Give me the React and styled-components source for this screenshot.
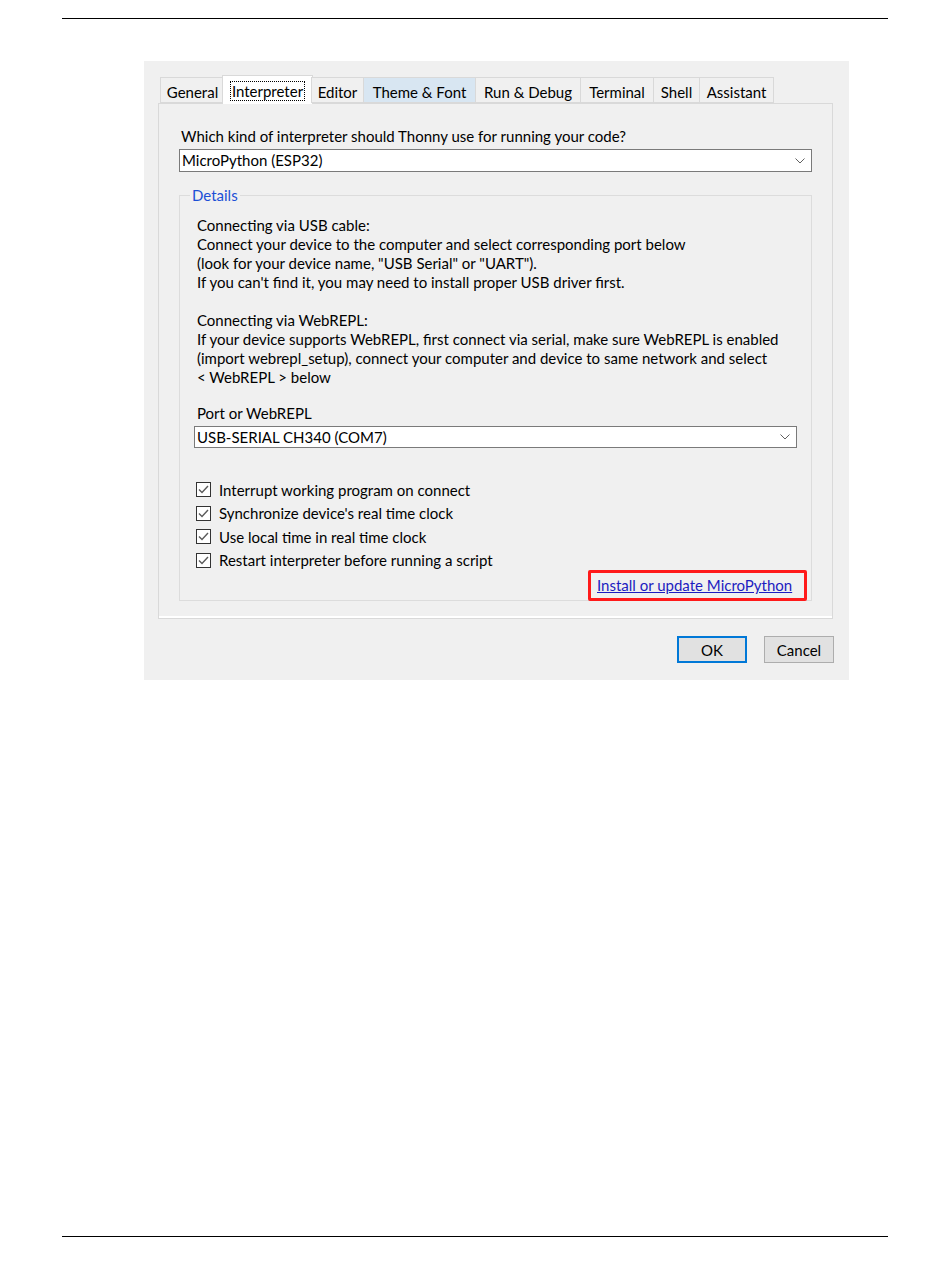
import React from "react";
import styled, { createGlobalStyle } from "styled-components";

const GlobalStyle = createGlobalStyle`
  html, body {
    margin: 0;
    padding: 0;
    background: #ffffff;
  }
  body {
    font-family: "Lato", "Noto Sans", "DejaVu Sans", sans-serif;
    font-size: 15px;
    color: #000;
  }
`;

const tabs = [
  { label: "General", width: 64 },
  { label: "Interpreter", width: 87, selected: true },
  { label: "Editor", width: 52 },
  { label: "Theme & Font", width: 112, hover: true },
  { label: "Run & Debug", width: 105 },
  { label: "Terminal", width: 73 },
  { label: "Shell", width: 46 },
  { label: "Assistant", width: 75 },
];

const options = [
  "Interrupt working program on connect",
  "Synchronize device's real time clock",
  "Use local time in real time clock",
  "Restart interpreter before running a script",
];

const App = () => {
  return (
    <Page>
      <GlobalStyle />
      <Rule />
      <Dialog>
        <TabBar>
          {tabs.map((t) => (
            <Tab key={t.label} $width={t.width} $selected={t.selected} $hover={t.hover}>
              {t.selected ? <Focus>{t.label}</Focus> : t.label}
            </Tab>
          ))}
        </TabBar>
        <Panel>
          <Label>Which kind of interpreter should Thonny use for running your code?</Label>
          <Combo $height={23}>
            <span>MicroPython (ESP32)</span>
            <Chevron />
          </Combo>
          <Group>
            <Legend>Details</Legend>
            <Text>
              Connecting via USB cable:
              <br />
              Connect your device to the computer and select corresponding port below
              <br />
              (look for your device name, "USB Serial" or "UART").
              <br />
              If you can't find it, you may need to install proper USB driver first.
              <br />
              <br />
              Connecting via WebREPL:
              <br />
              If your device supports WebREPL, first connect via serial, make sure WebREPL is enabled
              <br />
              (import webrepl_setup), connect your computer and device to same network and select
              <br />
              {"< WebREPL > below"}
            </Text>
            <PortLabel>Port or WebREPL</PortLabel>
            <Combo $height={22}>
              <span>USB-SERIAL CH340 (COM7)</span>
              <Chevron />
            </Combo>
            <Checks>
              {options.map((o) => (
                <CheckRow key={o}>
                  <Box>
                    <svg width="11" height="9" viewBox="0 0 11 9">
                      <polyline points="1,4.5 4,7.5 10,1" fill="none" stroke="#5a5a5a" strokeWidth="1.4" />
                    </svg>
                  </Box>
                  {o}
                </CheckRow>
              ))}
            </Checks>
            <LinkRow>
              <Highlight>
                <LinkText href="#">Install or update MicroPython</LinkText>
              </Highlight>
            </LinkRow>
          </Group>
        </Panel>
        <Buttons>
          <Button $default>OK</Button>
          <Button>Cancel</Button>
        </Buttons>
      </Dialog>
      <BottomRule />
    </Page>
  );
};

const Chevron = () => (
  <svg width="10" height="6" viewBox="0 0 10 6">
    <polyline points="0.5,0.5 5,5 9.5,0.5" fill="none" stroke="#606060" strokeWidth="1" />
  </svg>
);

const Page = styled.div`
  width: 826px;
  padding: 18px 0 0 62px;
`;

const Rule = styled.div`
  height: 1px;
  background: #000;
`;

const BottomRule = styled(Rule)`
  margin-top: 556px;
`;

const Dialog = styled.div`
  width: 705px;
  height: 619px;
  box-sizing: border-box;
  margin: 42px 0 0 82px;
  padding: 14px 15px 0 14px;
  background: #f0f0f0;
  display: flex;
  flex-direction: column;
`;

const TabBar = styled.div`
  display: flex;
  align-items: flex-end;
  padding-left: 2px;
  height: 29px;
  position: relative;
  z-index: 1;
  margin-bottom: -1px;
`;

const Tab = styled.div`
  box-sizing: border-box;
  width: ${(p) => p.$width + (p.$selected ? 4 : 0)}px;
  height: ${(p) => (p.$selected ? 29 : 26)}px;
  margin: ${(p) => (p.$selected ? "0 -2px" : "0 0 1px 0")};
  border: 1px solid #d9d9d9;
  border-right: ${(p) => (p.$selected ? "1px solid #d9d9d9" : "none")};
  border-bottom: ${(p) => (p.$selected ? "none" : "1px solid #d9d9d9")};
  background: ${(p) => (p.$selected ? "#ffffff" : p.$hover ? "#d8e6f2" : "#f0f0f0")};
  display: flex;
  align-items: center;
  justify-content: center;
  padding-top: ${(p) => (p.$selected ? 1 : 3)}px;
  white-space: nowrap;
  &:last-child {
    border-right: 1px solid #d9d9d9;
  }
`;

const Focus = styled.span`
  outline: 1px dotted #000;
  line-height: 18px;
  padding: 0 1px;
`;

const Panel = styled.div`
  width: 675px;
  box-sizing: border-box;
  border: 1px solid #d9d9d9;
  box-shadow: inset 0 -2px 0 #ffffff;
  padding: 23px 20px 17px 20px;
  display: flex;
  flex-direction: column;
`;

const Label = styled.div`
  line-height: 19px;
  padding-left: 2px;
  margin-bottom: 3px;
`;

const Combo = styled.div`
  height: ${(p) => p.$height}px;
  box-sizing: border-box;
  border: 1px solid #7a7a7a;
  background: #fff;
  display: flex;
  align-items: center;
  justify-content: space-between;
  padding: 0 6px 0 2px;
  line-height: 19px;
`;

const Group = styled.fieldset`
  margin: 14px 0 0 0;
  padding: 11px 14px 0 14px;
  border: 1px solid #dcdcdc;
  min-width: 0;
  display: flex;
  flex-direction: column;
`;

const Legend = styled.legend`
  color: #1a4fd6;
  padding: 0 2px;
  margin-left: -4px;
  line-height: 19px;
`;

const Text = styled.div`
  line-height: 19px;
  padding-left: 3px;
`;

const PortLabel = styled.div`
  line-height: 19px;
  padding-left: 3px;
  margin: 17px 0 3px 0;
`;

const Checks = styled.div`
  margin: 30px 0 0 0;
  display: flex;
  flex-direction: column;
`;

const CheckRow = styled.div`
  height: 23.5px;
  display: flex;
  align-items: center;
  gap: 8px;
  padding-left: 2px;
`;

const Box = styled.span`
  width: 13px;
  height: 13px;
  border: 1px solid #333;
  background: #fff;
  display: flex;
  align-items: center;
  justify-content: center;
`;

const LinkRow = styled.div`
  display: flex;
  justify-content: flex-end;
  margin: -2px -10px -1px 0;
`;

const Highlight = styled.div`
  border: 3px solid #ff1a1a;
  border-radius: 2px;
  width: 219px;
  height: 31px;
  box-sizing: border-box;
  padding: 0 0 0 6px;
  display: flex;
  align-items: center;
`;

const LinkText = styled.a`
  color: #1c1cc0;
  text-decoration: underline;
  line-height: 19px;
  white-space: nowrap;
`;

const Buttons = styled.div`
  display: flex;
  justify-content: flex-end;
  gap: 17px;
  margin-top: 17px;
`;

const Button = styled.div`
  width: 70px;
  height: 27px;
  box-sizing: border-box;
  border: ${(p) => (p.$default ? "2px solid #0078d7" : "1px solid #adadad")};
  background: #e1e1e1;
  display: flex;
  align-items: center;
  justify-content: center;
`;

export default App;
